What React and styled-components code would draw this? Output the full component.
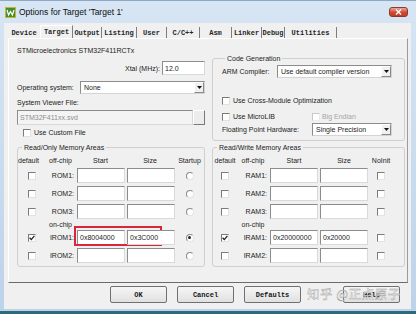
import React from "react";
import styled, { createGlobalStyle } from "styled-components";

const GlobalStyle = createGlobalStyle`
  * { box-sizing: border-box; }
  html, body { margin: 0; padding: 0; background: #ffffff; }
  body { font-family: "Liberation Sans", Arial, sans-serif; color: #1c1c1c; }
`;

const Window = styled.div`
  position: relative;
  width: 416px;
  height: 314px;
  display: flex;
  flex-direction: column;
  background: linear-gradient(to bottom, #d7e5f4, #bdd3ea);
  border-bottom: 3px solid #2d6a80;
  overflow: hidden;
`;

const TitleBar = styled.div`
  height: 23px;
  flex: none;
  display: flex;
  align-items: center;
  padding: 0 8px 0 5px;
  border-top: 1px solid #8ea9c6;
`;

const TitleText = styled.span`
  margin-left: 3px;
  font-size: 8.5px;
  color: #0d0d0d;
`;

const CloseButton = styled.div`
  margin-left: auto;
  width: 19px;
  height: 10px;
  border: 1px solid #8d3a2a;
  border-radius: 3px;
  background: linear-gradient(to bottom, #e9a79b, #cf4a32 55%, #c23d26);
  display: flex;
  align-items: center;
  justify-content: center;
`;

const Client = styled.div`
  flex: 1;
  margin: 0 5px 2px 4px;
  padding: 2px 3px 0 4px;
  background: #f0f0f0;
  display: flex;
  flex-direction: column;
`;

const TabStrip = styled.div`
  display: flex;
  align-items: flex-end;
  height: 13px;
  flex: none;
`;

const Tab = styled.div`
  width: ${(p) => p.$w}px;
  height: ${(p) => (p.$active ? 13 : 11)}px;
  display: flex;
  align-items: center;
  justify-content: center;
  font-family: "Liberation Mono", "Courier New", monospace;
  font-size: 7px;
  font-weight: bold;
  color: #262626;
  border-right: ${(p) => (p.$sep ? "1px solid #7d7d7d" : "none")};
  ${(p) =>
    p.$active &&
    "border-top: 1px solid #fff; border-left: 1px solid #fff; background: #f0f0f0;"}
`;

const Panel = styled.div`
  height: 245px;
  flex: none;
  border: 1px solid;
  border-color: #ffffff #9b9b9b #6b6b6b #ffffff;
  display: flex;
  flex-direction: column;
`;

const Section = styled.div`
  display: grid;
  grid-template-columns: 188px 193px;
  column-gap: 7px;
  align-items: start;
  padding: 0 2px 0 8px;
  margin-top: ${(p) => p.$top || 0}px;
`;

const Column = styled.div`
  display: flex;
  flex-direction: column;
`;

const Text = styled.span`
  font-size: 7px;
  line-height: 9px;
  white-space: nowrap;
  color: ${(p) => (p.$dim ? "#a5a5a5" : "#1c1c1c")};
`;

const Line = styled.div`
  display: flex;
  align-items: center;
  height: ${(p) => p.$h || 9}px;
  width: ${(p) => (p.$w ? `${p.$w}px` : "auto")};
  margin-top: ${(p) => p.$top || 0}px;
  justify-content: ${(p) => (p.$end ? "flex-end" : "flex-start")};
  gap: ${(p) => p.$gap || 0}px;
  padding-left: ${(p) => p.$indent || 0}px;
`;

const Label = styled.span`
  font-size: 7px;
  width: ${(p) => (p.$w ? `${p.$w}px` : "auto")};
  flex: none;
  white-space: nowrap;
  margin-right: ${(p) => p.$mr || 0}px;
`;

const Field = styled.div`
  height: ${(p) => p.$h || 15}px;
  width: ${(p) => (p.$w ? `${p.$w}px` : "auto")};
  flex: ${(p) => (p.$w ? "none" : 1)};
  border: 1px solid;
  border-color: #8c8c8c #d9d9d9 #d9d9d9 #8c8c8c;
  background: ${(p) => (p.$disabled ? "#f4f4f4" : "#ffffff")};
  color: ${(p) => (p.$disabled ? "#8d8d8d" : "#1c1c1c")};
  font-size: 7px;
  padding-left: 2px;
  display: flex;
  align-items: center;
  white-space: nowrap;
  overflow: hidden;
`;

const BrowseButton = styled.div`
  width: 12px;
  height: 15px;
  flex: none;
  border: 1px solid;
  border-color: #ffffff #7a7a7a #7a7a7a #ffffff;
  background: #ececec;
`;

const SelectBox = styled.div`
  height: 13px;
  width: ${(p) => (p.$w ? `${p.$w}px` : "auto")};
  flex: ${(p) => (p.$w ? "none" : 1)};
  display: flex;
  align-items: center;
  background: #ffffff;
  border: 1px solid;
  border-color: #8c8c8c #d4d4d4 #d4d4d4 #8c8c8c;
  font-size: 7px;
  padding-left: 3px;
  white-space: nowrap;
`;

const DropArrow = styled.span`
  margin-left: auto;
  width: 10px;
  height: 11px;
  display: flex;
  align-items: center;
  justify-content: center;
  background: #f0f0f0;
  border: 1px solid;
  border-color: #ffffff #8a8a8a #8a8a8a #ffffff;
`;

const Box = styled.span`
  display: inline-flex;
  align-items: center;
  justify-content: center;
  width: 8px;
  height: 8px;
  flex: none;
  border: 1px solid;
  border-color: ${(p) =>
    p.$disabled
      ? "#c8c8c8 #ececec #ececec #c8c8c8"
      : "#7b7b7b #e2e2e2 #e2e2e2 #7b7b7b"};
  background: #ffffff;
`;

const RadioDot = styled.span`
  display: inline-flex;
  align-items: center;
  justify-content: center;
  width: 8px;
  height: 8px;
  border-radius: 50%;
  border: 1px solid;
  border-color: #8a8a8a #e4e4e4 #e4e4e4 #8a8a8a;
  background: #ffffff;

  &::after {
    content: "";
    width: 3px;
    height: 3px;
    border-radius: 50%;
    background: ${(p) => (p.$on ? "#222" : "transparent")};
  }
`;

const Group = styled.fieldset`
  margin: ${(p) => p.$top || 0}px 0 0 0;
  padding: ${(p) => p.$pad};
  min-width: 0;
  border: 1px solid #cfcfcf;
  border-radius: 3px;
`;

const GroupTitle = styled.legend`
  margin-left: ${(p) => p.$ml || 3}px;
  padding: 0 2px;
  font-size: 7px;
  line-height: 9px;
  color: #1c1c1c;
`;

const MemGrid = styled.div`
  display: grid;
  grid-template-columns: ${(p) => p.$cols};
  grid-template-rows: 9px 15px 15px 15px 5px 15px 15px;
  row-gap: 3px;
  align-items: center;
  padding-top: 4px;
`;

const Cell = styled.div`
  display: flex;
  align-items: center;
  height: 100%;
  position: relative;
  font-size: 7px;
  line-height: 9px;
  white-space: nowrap;
  justify-content: ${(p) => p.$justify || "center"};
  padding-left: ${(p) => p.$pl || 0}px;
  padding-right: ${(p) => p.$pr || 0}px;
`;

const Highlight = styled.div`
  position: absolute;
  left: -2px;
  top: -4px;
  width: 88px;
  height: 20px;
  border: 2px solid #d9263a;
  pointer-events: none;
`;

const ButtonRow = styled.div`
  display: flex;
  gap: 10px;
  padding-left: 102px;
  margin-top: 3px;
`;

const Button = styled.div`
  width: 57px;
  height: 17px;
  margin-left: ${(p) => p.$ml || 0}px;
  display: flex;
  align-items: center;
  justify-content: center;
  border: 1px solid #707070;
  border-radius: 2px;
  background: linear-gradient(to bottom, #f6f6f6, #e0e0e0);
  font-family: "Liberation Mono", "Courier New", monospace;
  font-size: 7px;
  font-weight: bold;
  color: #161616;
`;

const Watermark = styled.div`
  position: absolute;
  left: 307px;
  top: 284px;
  font-family: "Noto Sans CJK SC", sans-serif;
  font-size: 12.5px;
  letter-spacing: 0.5px;
  color: rgba(250, 250, 250, 0.92);
  -webkit-text-stroke: 0.4px #a3a3a3;
  white-space: nowrap;
`;

const tabs = [
  { label: "Device", w: 32 },
  { label: "Target", w: 33, active: true },
  { label: "Output", w: 29 },
  { label: "Listing", w: 35 },
  { label: "User", w: 30 },
  { label: "C/C++", w: 33 },
  { label: "Asm", w: 32 },
  { label: "Linker", w: 30 },
  { label: "Debug", w: 23 },
  { label: "Utilities", w: 52 },
];

const romRows = [
  { name: "ROM1:" },
  { name: "ROM2:" },
  { name: "ROM3:" },
  { onChip: true },
  { name: "IROM1:", start: "0x8004000", size: "0x3C000", on: true, startup: true, mark: true },
  { name: "IROM2:" },
];

const ramRows = [
  { name: "RAM1:" },
  { name: "RAM2:" },
  { name: "RAM3:" },
  { onChip: true },
  { name: "IRAM1:", start: "0x20000000", size: "0x20000", on: true },
  { name: "IRAM2:" },
];

const Check = ({ checked, disabled }) => (
  <Box $disabled={disabled}>
    {checked && (
      <svg width="6" height="6" viewBox="0 0 6 6">
        <path d="M0.6 2.8 L2.3 4.6 L5.4 0.9" stroke="#1e1e1e" strokeWidth="1.3" fill="none" />
      </svg>
    )}
  </Box>
);

const Select = ({ value, w }) => (
  <SelectBox $w={w}>
    {value}
    <DropArrow>
      <svg width="5" height="3" viewBox="0 0 5 3">
        <path d="M0 0 H5 L2.5 3 Z" fill="#111" />
      </svg>
    </DropArrow>
  </SelectBox>
);

const MemoryGroup = ({ title, rows, cols, last, ram }) => (
  <Group $pad="0 0 3px 0">
    <GroupTitle $ml={4}>{title}</GroupTitle>
    <MemGrid $cols={cols}>
      <Cell $justify={ram ? "center" : "flex-start"}>default</Cell>
      <Cell>off-chip</Cell>
      <Cell>Start</Cell>
      <Cell>Size</Cell>
      <Cell>{last}</Cell>
      {rows.map((r, i) =>
        r.onChip ? (
          <React.Fragment key={i}>
            <span />
            <Cell>on-chip</Cell>
            <span />
            <span />
            <span />
          </React.Fragment>
        ) : (
          <React.Fragment key={i}>
            <Cell>
              <Check checked={r.on} />
            </Cell>
            <Cell $justify="flex-end" $pr={2}>
              {r.name}
            </Cell>
            <Cell $justify="flex-start" $pl={1}>
              <Field $w={48}>{r.start}</Field>
              {r.mark && <Highlight />}
            </Cell>
            <Cell $justify="flex-start" $pl={ram ? 1 : 2}>
              <Field $w={48}>{r.size}</Field>
            </Cell>
            <Cell>{ram ? <Check /> : <RadioDot $on={r.startup} />}</Cell>
          </React.Fragment>
        )
      )}
    </MemGrid>
  </Group>
);

const App = () => {
  return (
    <Window>
      <GlobalStyle />
      <TitleBar>
        <svg width="11" height="11" viewBox="0 0 11 11">
          <rect x="0.5" y="0.5" width="10" height="10" fill="#3f8f2c" stroke="#c9b23a" />
          <path d="M2 3 L3.6 8 L5.5 4.5 L7.4 8 L9 3" stroke="#ffffff" strokeWidth="1.2" fill="none" />
        </svg>
        <TitleText>Options for Target 'Target 1'</TitleText>
        <CloseButton>
          <svg width="7" height="6" viewBox="0 0 7 6">
            <path d="M1 0.5 L6 5.5 M6 0.5 L1 5.5" stroke="#ffffff" strokeWidth="1.4" />
          </svg>
        </CloseButton>
      </TitleBar>

      <Client>
        <TabStrip>
          {tabs.map((t, i) => (
            <Tab key={t.label} $w={t.w} $active={t.active} $sep={i > 0}>
              {t.label}
            </Tab>
          ))}
        </TabStrip>

        <Panel>
          <Section>
            <Column>
              <Line $top={7}>
                <Text>STMicroelectronics STM32F411RCTx</Text>
              </Line>
              <Line $top={6} $h={14} $end>
                <Label $mr={2}>Xtal (MHz):</Label>
                <Field $w={43} $h={14}>12.0</Field>
              </Line>
              <Line $top={6} $h={13}>
                <Label $w={63}>Operating system:</Label>
                <Select value="None" />
              </Line>
              <Line $top={4}>
                <Text>System Viewer File:</Text>
              </Line>
              <Line $top={3} $h={15}>
                <Field $disabled>STM32F411xx.svd</Field>
                <BrowseButton />
              </Line>
              <Line $top={3} $indent={6} $gap={3}>
                <Check />
                <Text>Use Custom File</Text>
              </Line>
            </Column>

            <Group $top={15} $pad="0 12px 4px 9px">
              <GroupTitle>Code Generation</GroupTitle>
              <Line $top={2} $h={13}>
                <Label $w={55}>ARM Compiler:</Label>
                <Select value="Use default compiler version" w={115} />
              </Line>
              <Line $top={18} $gap={3}>
                <Check />
                <Text>Use Cross-Module Optimization</Text>
              </Line>
              <Line $top={7}>
                <Line $gap={3} $w={90}>
                  <Check />
                  <Text>Use MicroLIB</Text>
                </Line>
                <Line $gap={2}>
                  <Check disabled />
                  <Text $dim>Big Endian</Text>
                </Line>
              </Line>
              <Line $top={2} $h={13}>
                <Label $w={90}>Floating Point Hardware:</Label>
                <Select value="Single Precision" w={80} />
              </Line>
            </Group>
          </Section>

          <Section $top={2}>
            <MemoryGroup
              title="Read/Only Memory Areas"
              rows={romRows}
              cols="27px 31px 49px 50px 1fr"
              last="Startup"
            />
            <MemoryGroup
              title="Read/Write Memory Areas"
              rows={ramRows}
              cols="24px 32px 50px 50px 24px"
              last="NoInit"
              ram
            />
          </Section>
        </Panel>

        <ButtonRow>
          <Button>OK</Button>
          <Button>Cancel</Button>
          <Button>Defaults</Button>
          <Button $ml={32}>Help</Button>
        </ButtonRow>
      </Client>

      <Watermark>知乎 @正点原子</Watermark>
    </Window>
  );
};

export default App;
